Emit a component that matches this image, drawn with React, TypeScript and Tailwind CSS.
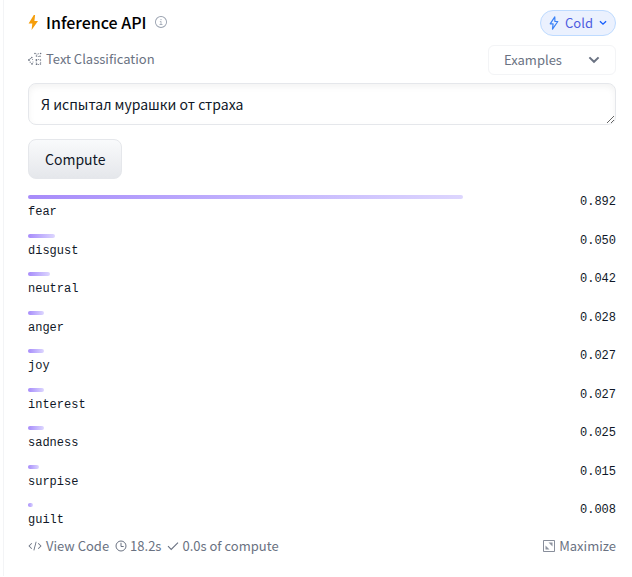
import { useState } from "react";

const results = [
  { label: "fear", score: "0.892", width: 435 },
  { label: "disgust", score: "0.050", width: 27 },
  { label: "neutral", score: "0.042", width: 22 },
  { label: "anger", score: "0.028", width: 16 },
  { label: "joy", score: "0.027", width: 16 },
  { label: "interest", score: "0.027", width: 16 },
  { label: "sadness", score: "0.025", width: 16 },
  { label: "surpise", score: "0.015", width: 11 },
  { label: "guilt", score: "0.008", width: 5 },
];

// Bar widths are shares of the label column.
const COLUMN_WIDTH = 498;

function BoltIcon() {
  return (
    <svg className="h-4 w-3 shrink-0" viewBox="0 0 12 16" fill="#f59e0b" aria-hidden="true">
      <path d="M5.8 1 .6 9.4h3.7L3.6 16 10 7H6.4L7.1 1Z" />
    </svg>
  );
}

function InfoIcon() {
  return (
    <svg className="size-3" viewBox="0 0 32 32" fill="currentColor" aria-hidden="true">
      <path d="M17 22v-8h-4v2h2v6h-3v2h8v-2z" />
      <circle cx="16" cy="9.5" r="1.6" />
      <path d="M16 0a16 16 0 1 0 0 32 16 16 0 0 0 0-32Zm0 29.6a13.6 13.6 0 1 1 0-27.2 13.6 13.6 0 0 1 0 27.2Z" />
    </svg>
  );
}

function ClassificationIcon() {
  return (
    <svg className="size-[14px]" viewBox="0 0 14 14" fill="#6b7280" aria-hidden="true">
      <circle cx="7" cy="1.5" r=".8" />
      <circle cx="9" cy="2" r=".6" />
      <circle cx="12.6" cy="1.5" r=".8" />
      <circle cx="10.6" cy="1.8" r=".5" />
      <circle cx="8.5" cy="4" r=".8" />
      <circle cx="12" cy="4.2" r=".8" />
      <circle cx="10.3" cy="4.5" r=".5" />
      <circle cx="3.8" cy="5.6" r=".8" />
      <circle cx="2.3" cy="6.6" r=".6" />
      <circle cx="1" cy="8" r=".9" />
      <circle cx="4.6" cy="7.6" r=".5" />
      <circle cx="2.2" cy="10.2" r=".6" />
      <circle cx="4" cy="11.8" r=".9" />
      <circle cx="5" cy="10" r=".5" />
      <circle cx="8.4" cy="8" r=".9" />
      <circle cx="10.4" cy="7.6" r=".5" />
      <circle cx="12.4" cy="8" r=".8" />
      <circle cx="8.2" cy="10" r=".5" />
      <circle cx="12.7" cy="10.2" r=".5" />
      <circle cx="8.6" cy="12.2" r=".9" />
      <circle cx="10.5" cy="12.5" r=".5" />
      <circle cx="12.4" cy="12" r=".8" />
    </svg>
  );
}

function ColdIcon() {
  return (
    <svg className="h-[14px] w-[10px]" viewBox="0 0 10 14" fill="none" stroke="#3b82f6" strokeWidth="1.2" strokeLinejoin="round" aria-hidden="true">
      <path d="M5.8.9 1.2 7.8h2.9L3.5 13.1 8.8 5.5H5.9Z" />
    </svg>
  );
}

function Chevron({ className }: { className: string }) {
  return (
    <svg className={className} viewBox="0 0 12 8" fill="none" stroke="currentColor" strokeWidth="2" aria-hidden="true">
      <path d="m1.4 1.4 4.6 4.4 4.6-4.4" />
    </svg>
  );
}

function CodeIcon() {
  return (
    <svg className="size-[14px]" viewBox="0 0 32 32" fill="currentColor" aria-hidden="true">
      <path d="m31 16-7 7-1.4-1.4L28.2 16l-5.6-5.6L24 9zM1 16l7-7 1.4 1.4L3.8 16l5.6 5.6L8 23zM12.4 25.5l5.2-19.5 2 .5-5.2 19.5z" />
    </svg>
  );
}

function ClockIcon() {
  return (
    <svg className="size-3" viewBox="0 0 12 12" fill="none" stroke="currentColor" strokeWidth="1" aria-hidden="true">
      <circle cx="6" cy="6" r="5" />
      <path d="M6 2.8V6.5H8.7" />
    </svg>
  );
}

function CheckIcon() {
  return (
    <svg className="size-3" viewBox="0 0 12 12" fill="none" stroke="currentColor" strokeWidth="1.1" aria-hidden="true">
      <path d="m1 6.2 3.2 3.2L11 2.6" />
    </svg>
  );
}

function MaximizeIcon() {
  return (
    <svg className="size-3" viewBox="0 0 12 12" aria-hidden="true">
      <path d="M1 .5h10.5v11H.5V.5Z" fill="none" stroke="currentColor" opacity=".8" />
      <path d="M5.5 2.5h4v4zM2.5 5.5v4h4z" fill="currentColor" opacity=".75" />
    </svg>
  );
}

export default function App() {
  const [text, setText] = useState("Я испытал мурашки от страха");

  return (
    <main className="ml-[3px] border-l border-gray-100 bg-white pr-4 pb-5 pl-6 font-['Noto_Sans_CJK_SC','Noto_Sans',sans-serif] text-black">
      <header className="flex items-start justify-between pt-[10px]">
        <h1 className="flex items-center text-[16px] leading-6 font-medium">
          <BoltIcon />
          <span className="ml-[6px]">Inference API</span>
          <button type="button" aria-label="About the Inference API" className="ml-2 text-gray-400">
            <InfoIcon />
          </button>
        </h1>
        <button type="button" className="flex h-[26px] items-center rounded-full border border-blue-200 bg-[#ebf1fe] px-2 text-[13px] leading-5 text-[#4f5de0]">
          <ColdIcon />
          <span className="mx-[6px]">Cold</span>
          <Chevron className="h-[6px] w-[8px] text-blue-600" />
        </button>
      </header>

      <div className="mt-[9px] flex items-start justify-between text-[13px] leading-5 text-gray-500">
        <div className="flex items-center gap-1 pt-1">
          <ClassificationIcon />
          <span>Text Classification</span>
        </div>
        <div className="relative">
          <select aria-label="Examples" className="block h-[30px] w-32 appearance-none rounded-md border border-gray-100 bg-white pl-[15px] text-[13px] leading-5">
            <option>Examples</option>
          </select>
          <Chevron className="pointer-events-none absolute top-[11px] right-4 h-[8px] w-[12px]" />
        </div>
      </div>

      <form onSubmit={(event) => event.preventDefault()}>
        <textarea
          aria-label="Text to classify"
          rows={1}
          value={text}
          onChange={(event) => setText(event.target.value)}
          className="mt-2 block h-[42px] w-full resize-y overflow-hidden rounded-lg border border-gray-200 px-3 py-2 text-[14px] leading-6 text-gray-900 shadow-[inset_0_3px_6px_#0000000d] outline-none"
        />
        <button type="submit" className="mt-[14px] block h-10 rounded-lg border border-gray-200 bg-linear-to-b from-gray-50 to-gray-200 px-4 text-[14px] leading-6 text-gray-900">
          Compute
        </button>
      </form>

      <ul className="mt-4 flex h-[333px] flex-col justify-between font-['Liberation_Mono',monospace] text-[12px] leading-4 text-gray-900">
        {results.map(({ label, score, width }) => (
          <li key={label} className="flex items-start justify-between">
            <div className="flex-1">
              <div
                className="mb-[5px] h-1 rounded-full bg-linear-to-r from-[#a78bfa] to-[#ddd6fe]"
                style={{ width: `${(width / COLUMN_WIDTH) * 100}%` }}
              />
              <span className="block">{label}</span>
            </div>
            <span className="-mt-px w-[90px] text-right">{score}</span>
          </li>
        ))}
      </ul>

      <footer className="mt-2 flex items-center text-[13px] leading-5 text-gray-500">
        <button type="button" className="flex items-center gap-1">
          <CodeIcon />
          View Code
        </button>
        <span className="ml-[6px] flex items-center gap-[3px]">
          <ClockIcon />
          18.2s
        </span>
        <span className="ml-[6px] flex items-center gap-[3px]">
          <CheckIcon />
          0.0s of compute
        </span>
        <button type="button" className="ml-auto flex items-center gap-1">
          <MaximizeIcon />
          Maximize
        </button>
      </footer>
    </main>
  );
}
